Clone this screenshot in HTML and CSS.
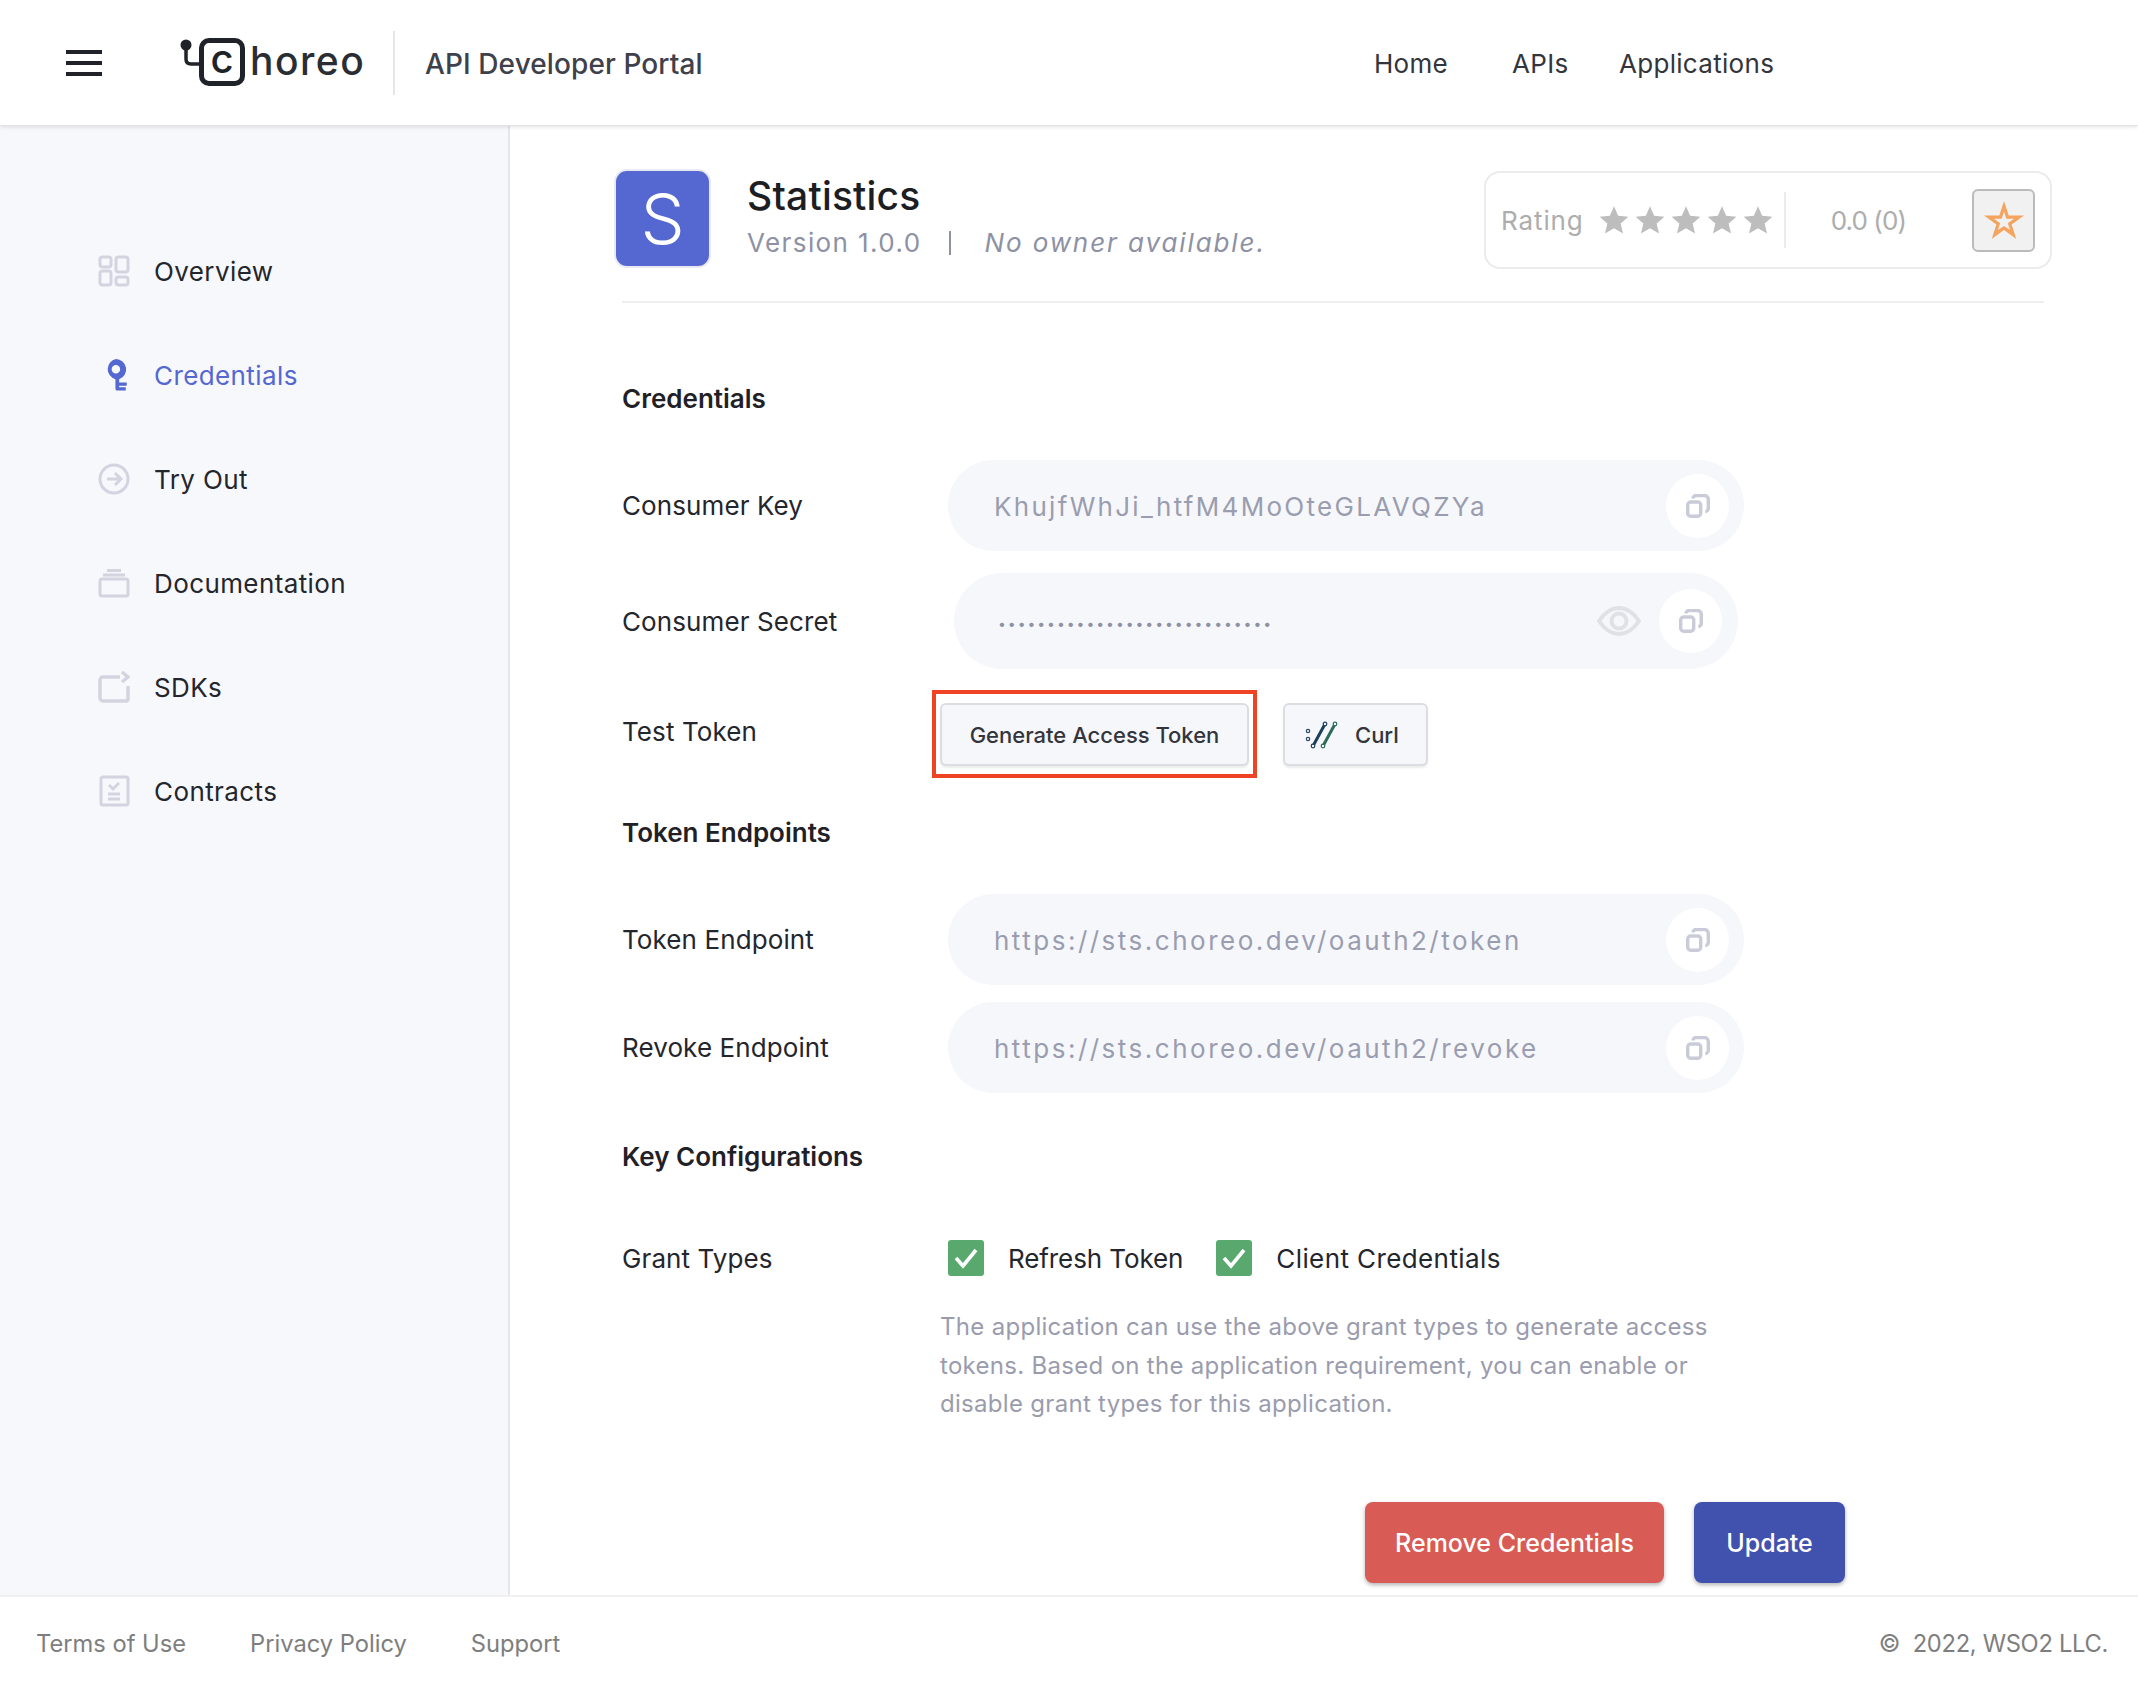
FILE: index.html
```html
<!DOCTYPE html>
<html lang="en">
<head>
    <meta charset="UTF-8">
    <meta name="viewport" content="width=device-width, initial-scale=1.0">
    <title>Choreo API Developer Portal</title>
    <link rel="stylesheet" href="styles.css">
</head>
<body>
    <header class="topbar">
        <div class="menu-btn"><span></span><span></span><span></span></div>
        <div class="logo">
            <svg class="logo-tube" viewBox="0 0 22 40" width="22" height="40">
                <circle cx="6" cy="6" r="5.5" fill="#1f2329"/>
                <path d="M6 8 V20 Q6 25 11 25 H20" fill="none" stroke="#1f2329" stroke-width="3.5"/>
            </svg>
            <span class="logo-box">c</span>
            <span class="logo-text">horeo</span>
        </div>
        <div class="portal-name">API Developer Portal</div>
        <nav class="topnav">
            <a class="topnav-home">Home</a>
            <a class="topnav-apis">APIs</a>
            <a>Applications</a>
        </nav>
    </header>

    <div class="middle">
        <aside class="sidebar">
            <a class="side-item">
                <svg class="side-icon" viewBox="0 0 32 32" fill="none" stroke="#d2d4e0" stroke-width="3">
                    <rect x="2" y="2" width="11" height="10" rx="2.5"/>
                    <rect x="2" y="16" width="11" height="14" rx="2.5"/>
                    <rect x="18" y="2" width="12" height="15" rx="2.5"/>
                    <rect x="18" y="22" width="12" height="8" rx="2.5"/>
                </svg>
                Overview
            </a>
            <a class="side-item active">
                <svg class="side-icon" viewBox="0 0 32 34">
                    <path fill="#5567d0" fill-rule="evenodd" d="M18 0a11 11 0 0 1 3.500 21.400V25h8v3.500h-8V30h7v3.500h-9a2 2 0 0 1-2-2V21.400A11 11 0 0 1 18 0zm0 6.500a4.500 4.500 0 1 0 0 9 4.500 4.500 0 0 0 0-9z"/>
                </svg>
                Credentials
            </a>
            <a class="side-item">
                <svg class="side-icon" viewBox="0 0 32 32" fill="none" stroke="#d2d4e0" stroke-width="3">
                    <circle cx="16" cy="16" r="14"/>
                    <path d="M9 16h14M17 10l6 6-6 6"/>
                </svg>
                Try Out
            </a>
            <a class="side-item">
                <svg class="side-icon" viewBox="0 0 32 32" fill="none" stroke="#d2d4e0" stroke-width="3">
                    <rect x="2" y="12" width="28" height="17" rx="2"/>
                    <path d="M5 8h22M9 3.500h14"/>
                </svg>
                Documentation
            </a>
            <a class="side-item">
                <svg class="side-icon" viewBox="0 0 32 32" fill="none" stroke="#d2d4e0" stroke-width="3.400">
                    <path d="M22 6H5a3 3 0 0 0-3 3v18a3 3 0 0 0 3 3h23a2 2 0 0 0 2-2V15"/>
                    <path d="M24 1l6 5-6 5"/>
                </svg>
                SDKs
            </a>
            <a class="side-item">
                <svg class="side-icon" viewBox="0 0 32 32" fill="none" stroke="#d2d4e0" stroke-width="3">
                    <rect x="3" y="2" width="27" height="28" rx="2"/>
                    <path d="M11 10l4 4 6-6M10 19h12M10 24h12"/>
                </svg>
                Contracts
            </a>
        </aside>

        <main class="content">
            <div class="api-head">
                <div class="api-avatar">S</div>
                <div class="api-info">
                    <h1>Statistics</h1>
                    <div class="api-meta">
                        <span>Version 1.0.0</span>
                        <span class="meta-sep"></span>
                        <em>No owner available.</em>
                    </div>
                </div>
                <div class="rating-box">
                    <span class="rating-label">Rating</span>
                    <span class="stars">
                        <svg viewBox="0 0 24 24"><path d="M12 1l3.300 7.600 8.200.7-6.200 5.400 1.900 8.100L12 18.500 4.800 22.800l1.900-8.100L.5 9.300l8.200-.7z"/></svg>
                        <svg viewBox="0 0 24 24"><path d="M12 1l3.300 7.600 8.200.7-6.200 5.400 1.900 8.100L12 18.500 4.800 22.800l1.900-8.100L.5 9.300l8.200-.7z"/></svg>
                        <svg viewBox="0 0 24 24"><path d="M12 1l3.300 7.600 8.200.7-6.200 5.400 1.900 8.100L12 18.500 4.800 22.800l1.900-8.100L.5 9.300l8.200-.7z"/></svg>
                        <svg viewBox="0 0 24 24"><path d="M12 1l3.300 7.600 8.200.7-6.200 5.400 1.900 8.100L12 18.500 4.800 22.800l1.900-8.100L.5 9.300l8.200-.7z"/></svg>
                        <svg viewBox="0 0 24 24"><path d="M12 1l3.300 7.600 8.200.7-6.200 5.400 1.900 8.100L12 18.500 4.800 22.800l1.900-8.100L.5 9.300l8.200-.7z"/></svg>
                    </span>
                    <span class="rating-sep"></span>
                    <span class="rating-value">0.0 (0)</span>
                    <div class="rate-btn">
                        <svg viewBox="0 0 40 38" width="40" height="38"><path fill="#f4a45f" fill-rule="evenodd" d="M20 0L24.700 14.500H40L27.600 23.500 32.300 38 20 29 7.700 38 12.400 23.500 0 14.500H15.300zM20 10.500L17.650 17.750H10L16.200 22.250 13.850 29 20 25 26.150 29 23.800 22.250 30 17.750H22.350z"/></svg>
                    </div>
                </div>
            </div>

            <h2 class="section-title first">Credentials</h2>

            <div class="row row-key">
                <label>Consumer Key</label>
                <div class="field">
                    <span class="field-text">KhujfWhJi_htfM4MoOteGLAVQZYa</span>
                    <span class="copy-btn"><svg viewBox="0 0 24 24" width="24" height="24" fill="none" stroke="#c9cbd9" stroke-width="3.400"><rect x="1.700" y="8" width="13" height="14.300" rx="3"/><path d="M7 4.500a3 3 0 0 1 3-3h8.300a4 4 0 0 1 4 4v9a3 3 0 0 1-3 3"/></svg></span>
                </div>
            </div>
            <div class="row row-secret">
                <label>Consumer Secret</label>
                <div class="field field-secret">
                    <span class="field-text dots">••••••••••••••••••••••••••••</span>
                    <svg class="eye" viewBox="0 0 44 30" width="44" height="30" fill="none" stroke="#e0e1e6" stroke-width="4"><path d="M2 15C8 6 15 2 22 2s14 4 20 13c-6 9-13 13-20 13S8 24 2 15z"/><circle cx="22" cy="15" r="7.500"/></svg>
                    <span class="copy-btn"><svg viewBox="0 0 24 24" width="24" height="24" fill="none" stroke="#c9cbd9" stroke-width="3.400"><rect x="1.700" y="8" width="13" height="14.300" rx="3"/><path d="M7 4.500a3 3 0 0 1 3-3h8.300a4 4 0 0 1 4 4v9a3 3 0 0 1-3 3"/></svg></span>
                </div>
            </div>
            <div class="row row-token">
                <label>Test Token</label>
                <div class="token-btns">
                    <div class="highlight"><button class="ghost-btn gen-btn">Generate Access Token</button></div>
                    <button class="ghost-btn curl-btn">
                        <svg viewBox="0 0 34 28" width="34" height="28" fill="none">
                            <circle cx="3" cy="10" r="1.700" stroke="#2e4a63" stroke-width="1.200"/>
                            <circle cx="3" cy="18" r="1.700" stroke="#2e4a63" stroke-width="1.200"/>
                            <path d="M20 3L8 25" stroke="#1d3f5e" stroke-width="3"/>
                            <path d="M30 3L18 25" stroke="#2d6a58" stroke-width="3"/>
                            <circle cx="20" cy="3" r="1.800" fill="#f6f7fb" stroke="#1d3f5e" stroke-width="1.200"/>
                            <circle cx="8" cy="25" r="1.800" fill="#f6f7fb" stroke="#1d3f5e" stroke-width="1.200"/>
                            <circle cx="30" cy="3" r="1.800" fill="#f6f7fb" stroke="#2d6a58" stroke-width="1.200"/>
                            <circle cx="18" cy="25" r="1.800" fill="#f6f7fb" stroke="#2d6a58" stroke-width="1.200"/>
                        </svg>
                        Curl
                    </button>
                </div>
            </div>

            <h2 class="section-title">Token Endpoints</h2>

            <div class="row row-endpoint">
                <label>Token Endpoint</label>
                <div class="field">
                    <span class="field-text url">https://sts.choreo.dev/oauth2/token</span>
                    <span class="copy-btn"><svg viewBox="0 0 24 24" width="24" height="24" fill="none" stroke="#c9cbd9" stroke-width="3.400"><rect x="1.700" y="8" width="13" height="14.300" rx="3"/><path d="M7 4.500a3 3 0 0 1 3-3h8.300a4 4 0 0 1 4 4v9a3 3 0 0 1-3 3"/></svg></span>
                </div>
            </div>
            <div class="row row-revoke">
                <label>Revoke Endpoint</label>
                <div class="field">
                    <span class="field-text url">https://sts.choreo.dev/oauth2/revoke</span>
                    <span class="copy-btn"><svg viewBox="0 0 24 24" width="24" height="24" fill="none" stroke="#c9cbd9" stroke-width="3.400"><rect x="1.700" y="8" width="13" height="14.300" rx="3"/><path d="M7 4.500a3 3 0 0 1 3-3h8.300a4 4 0 0 1 4 4v9a3 3 0 0 1-3 3"/></svg></span>
                </div>
            </div>

            <h2 class="section-title config">Key Configurations</h2>

            <div class="row row-grant">
                <label>Grant Types</label>
                <div class="checks">
                    <span class="check"><svg viewBox="0 0 36 36" width="36" height="36"><rect width="36" height="36" rx="3" fill="#59a96f"/><path d="M8 18l7 8 13-16" fill="none" stroke="#fff" stroke-width="3.600"/></svg>Refresh Token</span>
                    <span class="check"><svg viewBox="0 0 36 36" width="36" height="36"><rect width="36" height="36" rx="3" fill="#59a96f"/><path d="M8 18l7 8 13-16" fill="none" stroke="#fff" stroke-width="3.600"/></svg>Client Credentials</span>
                </div>
            </div>
            <p class="help">The application can use the above grant types to generate access tokens. Based on the application requirement, you can enable or disable grant types for this application.</p>

            <div class="actions">
                <button class="btn btn-red">Remove Credentials</button>
                <button class="btn btn-blue">Update</button>
            </div>
        </main>
    </div>

    <footer class="footer">
        <a>Terms of Use</a>
        <a>Privacy Policy</a>
        <a>Support</a>
        <span class="copyright">©&nbsp; 2022, WSO2 LLC.</span>
    </footer>
</body>
</html>
```

FILE: styles.css
```css
* {
    box-sizing: border-box;
}
html, body {
    height: 100%;
}
body {
    margin: 0;
    display: flex;
    flex-direction: column;
    min-height: 1682px;
    font-family: Inter, "Noto Sans", sans-serif;
    font-size: 26px;
    color: #24262d;
    background: #fff;
    overflow: hidden;
}

/* top bar */
.topbar {
    flex: 0 0 126px;
    display: flex;
    align-items: center;
    padding-left: 66px;
    background: #fff;
    border-bottom: 1px solid #e4e4e8;
    box-shadow: 0 1px 4px rgba(0, 0, 0, 0.12);
    position: relative;
    z-index: 2;
}
.menu-btn {
    width: 36px;
    display: flex;
    flex-direction: column;
    gap: 7px;
}
.menu-btn span {
    height: 4px;
    background: #1f2329;
}
.logo {
    display: flex;
    align-items: center;
    margin-left: 78px;
    width: 215px;
    height: 64px;
    border-right: 2px solid #e6e6e9;
}
.logo-tube {
    margin-top: -8px;
    margin-right: -3px;
}
.logo-box {
    width: 46px;
    height: 48px;
    border: 5px solid #1f2329;
    border-radius: 10px;
    display: flex;
    align-items: center;
    justify-content: center;
    font-size: 40px;
    font-weight: 500;
    line-height: 1;
    padding-bottom: 6px;
    color: #1f2329;
    margin-top: -1px;
}
.logo-text {
    margin-left: 5px;
    font-size: 39px;
    font-weight: 500;
    letter-spacing: 1.500px;
    color: #2a2d33;
    margin-top: -4px;
}
.portal-name {
    margin: 2px 0 0 30px;
    font-size: 28px;
    font-weight: 500;
    letter-spacing: 0.100px;
    color: #40404b;
}
.topnav {
    position: absolute;
    left: 1374px;
    top: 48px;
    display: flex;
    font-size: 26px;
    letter-spacing: 0.300px;
    color: #33353c;
}
.topnav-home {
    width: 138px;
}
.topnav-apis {
    width: 107px;
}

/* sidebar */
.middle {
    flex: 1;
    display: flex;
    min-height: 0;
}
.sidebar {
    flex: 0 0 510px;
    background: #f7f8fc;
    border-right: 2px solid #e6e6ea;
    padding: 93px 0 0 98px;
}
.side-item {
    display: flex;
    align-items: center;
    height: 104px;
    letter-spacing: 0.400px;
    color: #24262d;
}
.side-item.active {
    color: #5567d0;
}
.side-icon {
    width: 32px;
    height: 32px;
    margin-right: 24px;
    flex: none;
}

/* content */
.content {
    flex: 1;
    padding: 45px 0 0 112px;
    position: relative;
}
.api-head {
    display: flex;
    width: 1422px;
    height: 132px;
    border-bottom: 2px solid #eeeef0;
    position: relative;
}
.api-avatar {
    width: 97px;
    height: 99px;
    margin: -2px 0 0 -8px;
    border: 2px solid #e9e9f2;
    border-radius: 13px;
    background: #5567d0;
    color: #fff;
    font-size: 70px;
    font-weight: 300;
    display: flex;
    align-items: center;
    justify-content: center;
}
.api-info {
    margin-left: 36px;
}
.api-info h1 {
    margin: 2px 0 0;
    font-size: 39px;
    line-height: 46px;
    font-weight: 500;
    letter-spacing: 0.200px;
    color: #1c1e24;
}
.api-meta {
    display: flex;
    align-items: center;
    margin-top: 8px;
    font-size: 26px;
    letter-spacing: 1.400px;
    color: #8d91a3;
}
.meta-sep {
    width: 2px;
    height: 24px;
    background: #8d91a3;
    margin: 0 33px 0 28px;
}
.api-meta em {
    font-size: 26px;
    letter-spacing: 1.900px;
}
.rating-box {
    position: absolute;
    left: 862px;
    top: 0;
    width: 568px;
    height: 98px;
    display: flex;
    align-items: center;
    padding: 0 15px 0 15px;
    border: 2px solid #ebebed;
    border-radius: 16px;
    color: #adadad;
}
.rating-label {
    width: 98px;
    letter-spacing: 0.900px;
}
.stars {
    display: flex;
    gap: 6px;
}
.stars svg {
    width: 30px;
    height: 30px;
    fill: #bdbdbd;
}
.rating-sep {
    width: 2px;
    height: 56px;
    background: #ebebed;
    margin: 0 45px 0 11px;
}
.rating-value {
    width: 142px;
    letter-spacing: -0.900px;
}
.rate-btn {
    width: 63px;
    height: 63px;
    border: 2px solid #bbb;
    border-radius: 6px;
    background: #f1f1f1;
    display: flex;
    align-items: center;
    justify-content: center;
}

.section-title {
    margin: 0;
    font-size: 26px;
    font-weight: 600;
    line-height: 32px;
    color: #1f2127;
}
.section-title.first {
    margin-top: 80px;
}
.row {
    display: flex;
    align-items: center;
    width: 1122px;
}
.row label {
    flex: 0 0 326px;
    letter-spacing: 0.100px;
}
.field {
    flex: 1;
    height: 91px;
    display: flex;
    align-items: center;
    padding: 0 15px 0 46px;
    background: #f6f7fb;
    border-radius: 46px;
}
.field-text {
    flex: 1;
    padding-top: 2px;
    letter-spacing: 2.300px;
    color: #9a9daf;
}
.field-text.url {
    letter-spacing: 2.500px;
}
.copy-btn {
    width: 63px;
    height: 64px;
    border-radius: 50%;
    background: #fff;
    display: flex;
    align-items: center;
    justify-content: center;
}
.row-key {
    margin-top: 45px;
}
.row-secret {
    margin-top: 22px;
}
.field-secret {
    height: 96px;
    margin: 0 6px;
    border-radius: 48px;
    padding-left: 44px;
    padding-right: 16px;
}
.dots {
    font-size: 14px;
    letter-spacing: 1.950px;
    padding-top: 4px;
    color: #8f92a5;
}
.eye {
    margin-right: 18px;
}
.row-token {
    margin-top: 21px;
    align-items: flex-start;
}
.row-token label {
    margin-top: 26px;
    flex-basis: 310px;
}
.token-btns {
    display: flex;
    align-items: flex-start;
}
.highlight {
    width: 325px;
    height: 88px;
    border: 4px solid #ef4423;
    padding: 9px 4px 0;
}
.ghost-btn {
    height: 63px;
    font-family: inherit;
    font-size: 22px;
    font-weight: 500;
    color: #33353c;
    background: #f6f7fb;
    border: 2px solid #dcdde2;
    border-radius: 6px;
    box-shadow: 0 2px 2px rgba(0, 0, 0, 0.08);
}
.gen-btn {
    width: 100%;
}
.curl-btn {
    width: 145px;
    margin: 13px 0 0 26px;
    display: flex;
    align-items: center;
    gap: 16px;
    padding-left: 20px;
}
.section-title.config {
    margin-top: 48px;
}
.row-token + .section-title {
    margin-top: 39px;
}
.row-endpoint {
    margin-top: 45px;
}
.row-revoke {
    margin-top: 17px;
}
.row-grant {
    margin-top: 67px;
}
.checks {
    display: flex;
    gap: 33px;
}
.check {
    display: flex;
    align-items: center;
    gap: 24px;
    letter-spacing: -0.100px;
}
.check + .check {
    letter-spacing: 0.400px;
}
.help {
    width: 800px;
    margin: 32px 0 0 318px;
    font-size: 24px;
    line-height: 38.500px;
    letter-spacing: 0.300px;
    color: #9a9cae;
}
.actions {
    position: absolute;
    left: 855px;
    top: 1376px;
    display: flex;
    gap: 30px;
}
.btn {
    height: 81px;
    border: 0;
    border-radius: 8px;
    font-family: inherit;
    font-size: 25px;
    font-weight: 500;
    color: #fff;
    box-shadow: 0 2px 4px rgba(0, 0, 0, 0.3);
}
.btn-red {
    width: 299px;
    background: #d95b55;
}
.btn-blue {
    width: 151px;
    background: #4151ae;
}

/* footer */
.footer {
    flex: 0 0 87px;
    display: flex;
    align-items: center;
    padding: 8px 30px 0 36px;
    border-top: 2px solid #f0f0f2;
    background: #fff;
    font-size: 23.700px;
    color: #7e7e7e;
    position: relative;
    z-index: 1;
}
.footer a {
    margin-right: 64px;
}
.copyright {
    margin-left: auto;
    letter-spacing: -0.300px;
}
```
